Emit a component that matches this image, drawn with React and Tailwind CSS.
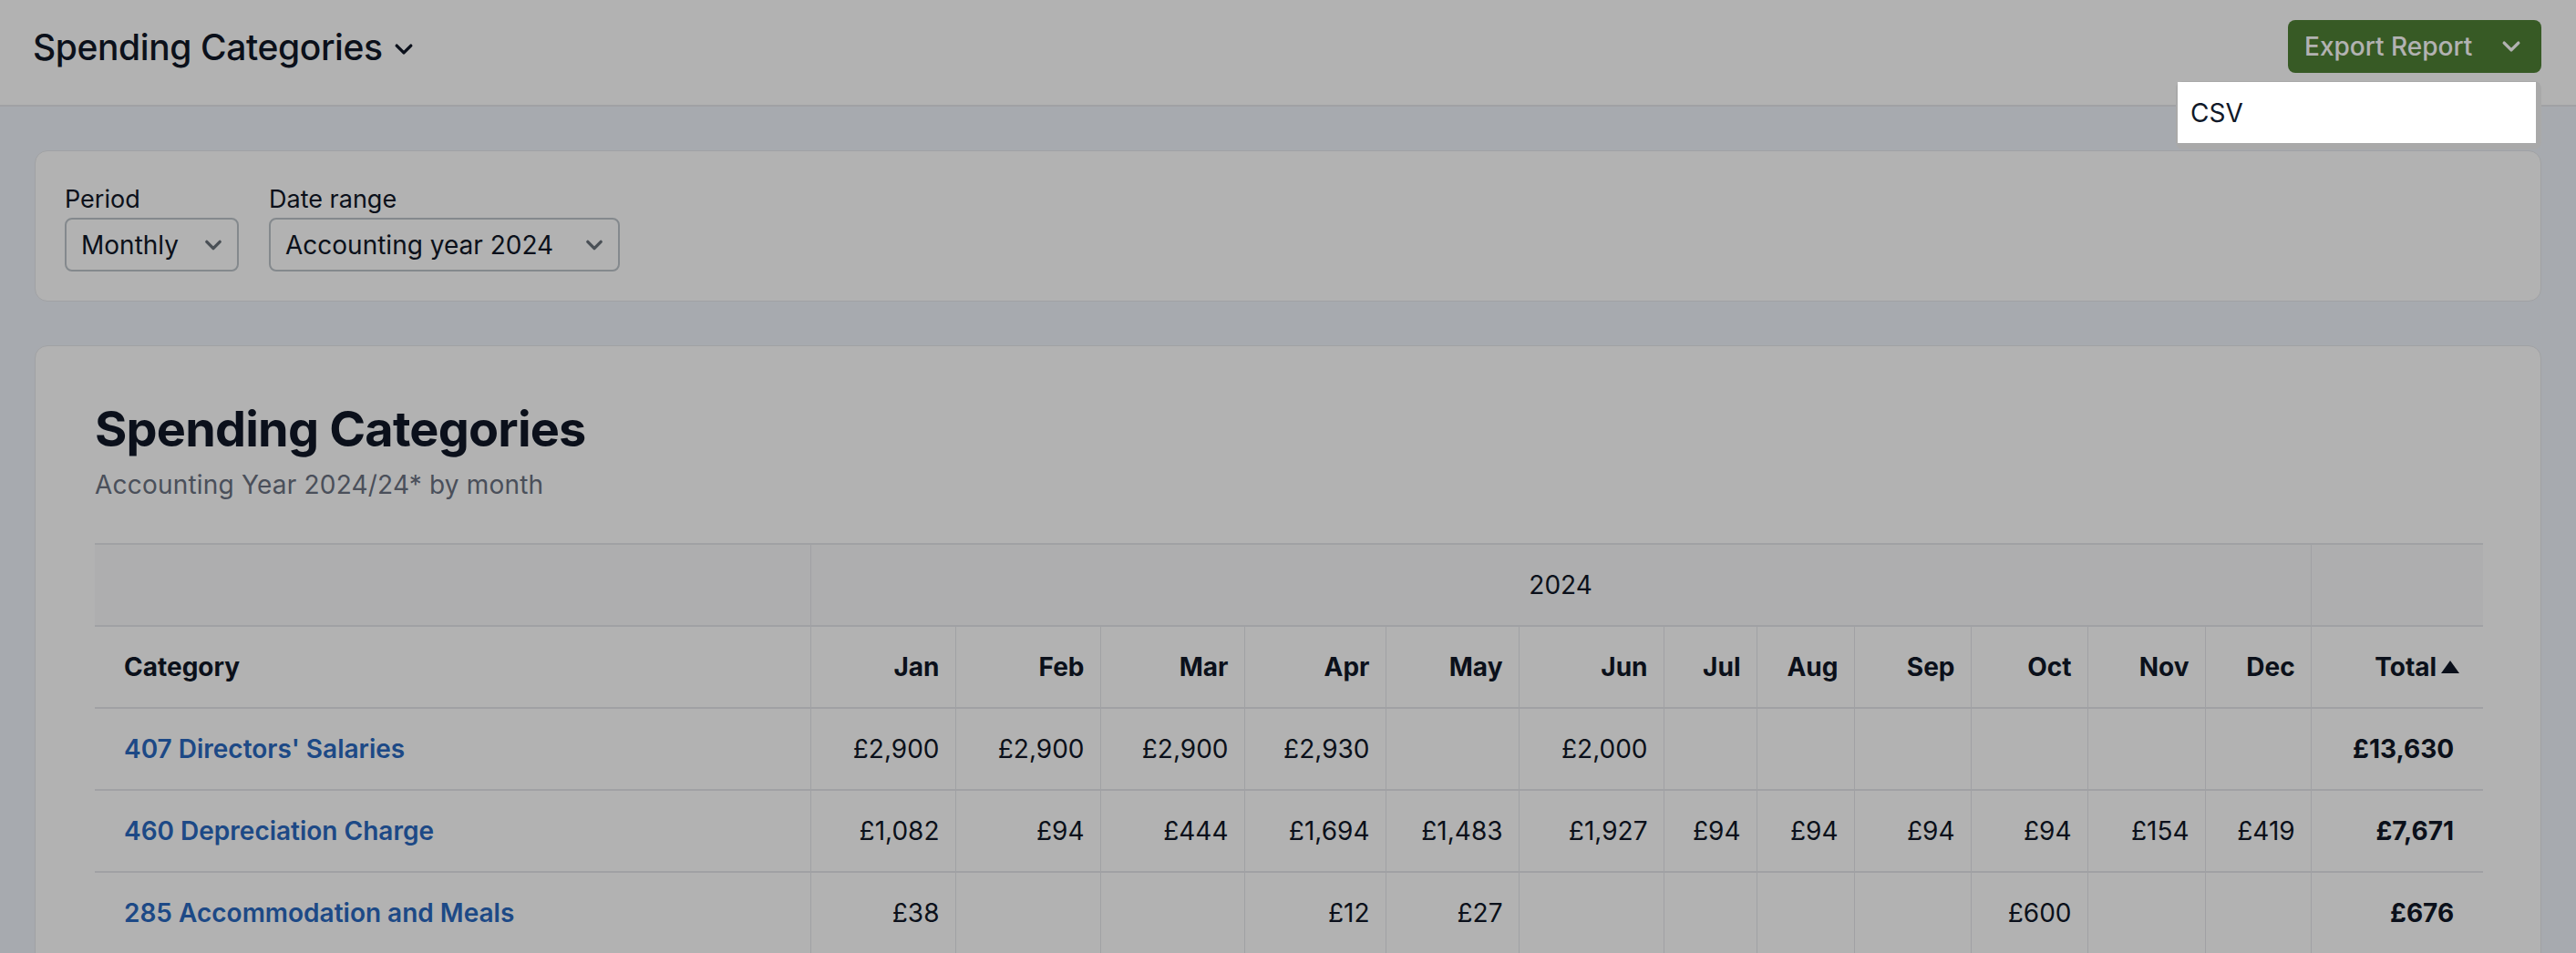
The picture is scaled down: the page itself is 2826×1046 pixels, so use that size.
import React from 'react';

const months = ['Jan', 'Feb', 'Mar', 'Apr', 'May', 'Jun', 'Jul', 'Aug', 'Sep', 'Oct', 'Nov', 'Dec'];
const colWidths = [785, 159, 159, 158, 155, 146, 159, 102, 107, 128, 128, 129, 116, 189];

const rows = [
    { name: "407 Directors' Salaries", values: ['£2,900', '£2,900', '£2,900', '£2,930', '', '£2,000', '', '', '', '', '', ''], total: '£13,630' },
    { name: '460 Depreciation Charge', values: ['£1,082', '£94', '£444', '£1,694', '£1,483', '£1,927', '£94', '£94', '£94', '£94', '£154', '£419'], total: '£7,671' },
    { name: '285 Accommodation and Meals', values: ['£38', '', '', '£12', '£27', '', '', '', '', '£600', '', ''], total: '£676' },
];

function Chevron({ className, strokeWidth = 2.4 }) {
    return (
        <svg viewBox="0 0 20 20" fill="none" stroke="currentColor" strokeWidth={strokeWidth} strokeLinecap="round" strokeLinejoin="round" className={className}>
            <path d="M4 7l6 6 6-6" />
        </svg>
    );
}

function Select({ label, value, width }) {
    return (
        <div className="flex flex-col">
            <span className="text-[27px] leading-[36px] text-gray-900">{label}</span>
            <div className={`mt-[2px] h-[59px] ${width} rounded-[8px] border-2 border-[#bec5cb] flex items-center justify-between pl-[16px] pr-[14px]`}>
                <span className="text-[28px] text-gray-900">{value}</span>
                <Chevron className="w-[24px] h-[24px] text-[#6a737b]" strokeWidth={2.8} />
            </div>
        </div>
    );
}

export default function App() {
    return (
        <div className="min-h-screen bg-[#f0f4fb] font-['Inter',sans-serif] text-gray-900">
            <header className="h-[117px] bg-white border-b-2 border-gray-200 flex items-start justify-between pt-[22px] pl-[36px] pr-[38px]">
                <div className="h-[60px] flex items-center gap-[10px]">
                    <h1 className="text-[39px] font-medium tracking-[-0.4px]">Spending Categories</h1>
                    <Chevron className="w-[26px] h-[26px] mt-[4px]" strokeWidth={2.6} />
                </div>
                <button className="h-[58px] w-[278px] rounded-[8px] bg-[#508235] text-white flex items-center justify-between pl-[18px] pr-[20px]">
                    <span className="text-[28px] font-medium">Export Report</span>
                    <Chevron className="w-[26px] h-[26px]" strokeWidth={2.6} />
                </button>
            </header>

            <main className="px-[38px] pt-[48px]">
                <div className="rounded-[14px] border border-gray-200 bg-white px-[32px] pt-[35px] pb-[32px] flex gap-[33px]">
                    <Select label="Period" value="Monthly" width="w-[191px]" />
                    <Select label="Date range" value="Accounting year 2024" width="w-[385px]" />
                </div>

                <div className="mt-[48px] rounded-[14px] border border-gray-200 bg-white px-[65px] pt-[59px] pb-[60px]">
                    <h2 className="text-[54px] leading-[64px] font-bold tracking-[-0.8px]">Spending Categories</h2>
                    <p className="mt-[12px] text-[28px] leading-[34px] tracking-[0.2px] text-gray-500">Accounting Year 2024/24* by month</p>

                    <table className="mt-[47px] w-full table-fixed border-collapse text-[28px]">
                        <colgroup>
                            {colWidths.map((w, i) => (
                                <col key={i} style={{ width: w }} />
                            ))}
                        </colgroup>
                        <thead>
                            <tr className="h-[90px] bg-gray-50 border-t-2 border-b-2 border-gray-200">
                                <th className="border-r border-gray-200"></th>
                                <th colSpan={12} className="font-normal text-center border-r border-gray-200">2024</th>
                                <th></th>
                            </tr>
                            <tr className="h-[90px] border-b-2 border-gray-200">
                                <th className="text-left font-bold pl-[32px] border-r border-gray-200">Category</th>
                                {months.map((m) => (
                                    <th key={m} className="text-right font-bold pr-[17px] border-r border-gray-200">{m}</th>
                                ))}
                                <th className="text-right font-bold pr-[25px]">
                                    <span className="inline-flex items-center gap-[4px]">
                                        Total
                                        <svg viewBox="0 0 22 16" className="w-[22px] h-[16px] fill-gray-900">
                                            <path d="M11 1L21 15H1z" />
                                        </svg>
                                    </span>
                                </th>
                            </tr>
                        </thead>
                        <tbody>
                            {rows.map((row) => (
                                <tr key={row.name} className="h-[90px] border-b-2 border-gray-200">
                                    <td className="pl-[32px] border-r border-gray-200">
                                        <a href="#" className="font-semibold text-[#2a69c0]">{row.name}</a>
                                    </td>
                                    {row.values.map((v, i) => (
                                        <td key={i} className="text-right pr-[17px] border-r border-gray-200">{v}</td>
                                    ))}
                                    <td className="text-right font-bold pr-[32px]">{row.total}</td>
                                </tr>
                            ))}
                        </tbody>
                    </table>
                </div>
            </main>

            {/* dimmed backdrop behind the open export menu */}
            <div className="fixed inset-0 bg-black/30 z-10"></div>
            <div className="fixed top-[89px] right-[38px] z-20 rounded-[8px] bg-[#a9a9a9] pt-px pl-[2px] pr-[6px] pb-[7px]">
                <div className="w-[393px] h-[67px] bg-white flex items-center pl-[14px] text-[28px] text-gray-900">CSV</div>
            </div>
        </div>
    );
}
